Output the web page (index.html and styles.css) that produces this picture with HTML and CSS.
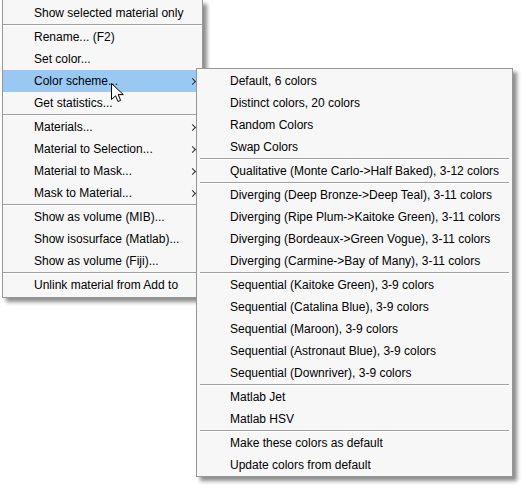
FILE: index.html
```html
<!DOCTYPE html>
<html>
<head>
<meta charset="utf-8">
<link rel="stylesheet" href="styles.css">
</head>
<body>
<div class="stage">
  <div class="menu main-menu">
    <div class="item">Show selected material only</div>
    <div class="sep"></div>
    <div class="item">Rename... (F2)</div>
    <div class="item">Set color...</div>
    <div class="item active has-sub">Color scheme...</div>
    <div class="item">Get statistics...</div>
    <div class="sep"></div>
    <div class="item has-sub">Materials...</div>
    <div class="item has-sub">Material to Selection...</div>
    <div class="item has-sub">Material to Mask...</div>
    <div class="item has-sub">Mask to Material...</div>
    <div class="sep"></div>
    <div class="item">Show as volume (MIB)...</div>
    <div class="item">Show isosurface (Matlab)...</div>
    <div class="item">Show as volume (Fiji)...</div>
    <div class="sep"></div>
    <div class="item">Unlink material from Add to</div>
  </div>

  <div class="menu sub-menu">
    <div class="item">Default, 6 colors</div>
    <div class="item">Distinct colors, 20 colors</div>
    <div class="item">Random Colors</div>
    <div class="item">Swap Colors</div>
    <div class="sep"></div>
    <div class="item">Qualitative (Monte Carlo-&gt;Half Baked), 3-12 colors</div>
    <div class="sep"></div>
    <div class="item">Diverging (Deep Bronze-&gt;Deep Teal), 3-11 colors</div>
    <div class="item">Diverging (Ripe Plum-&gt;Kaitoke Green), 3-11 colors</div>
    <div class="item">Diverging (Bordeaux-&gt;Green Vogue), 3-11 colors</div>
    <div class="item">Diverging (Carmine-&gt;Bay of Many), 3-11 colors</div>
    <div class="sep"></div>
    <div class="item">Sequential (Kaitoke Green), 3-9 colors</div>
    <div class="item">Sequential (Catalina Blue), 3-9 colors</div>
    <div class="item">Sequential (Maroon), 3-9 colors</div>
    <div class="item">Sequential (Astronaut Blue), 3-9 colors</div>
    <div class="item">Sequential (Downriver), 3-9 colors</div>
    <div class="sep"></div>
    <div class="item">Matlab Jet</div>
    <div class="item">Matlab HSV</div>
    <div class="sep"></div>
    <div class="item">Make these colors as default</div>
    <div class="item">Update colors from default</div>
  </div>

  <svg class="cursor" width="13" height="20" viewBox="0 0 13 20">
    <path d="M0.5 0.5 L0.5 16.5 L4.5 12.8 L7 18.5 L9.6 17.4 L7.2 11.6 L12.3 11.6 Z" fill="#fff" stroke="#000" stroke-width="1" stroke-linejoin="miter"/>
  </svg>
</div>
</body>
</html>
```

FILE: styles.css
```css
html, body {
  margin: 0;
  padding: 0;
  background: #ffffff;
}

.stage {
  position: relative;
  width: 525px;
  height: 489px;
  font-family: "Liberation Sans", Arial, sans-serif;
  font-size: 12px;
  color: #000;
}

.menu {
  box-sizing: border-box;
  background: #f7f7f7;
  border: 1px solid #979797;
  box-shadow: 4px 4px 4px rgba(0, 0, 0, 0.45);
  display: flex;
  flex-direction: column;
}

.main-menu {
  margin-left: 2px;
  width: 201px;
  border-top: none;
  padding: 2px 0 1px 0;
}

.sub-menu {
  position: absolute;
  left: 196px;
  top: 68px;
  width: 317px;
  padding: 1px 0 0 0;
}

.item {
  position: relative;
  height: 22px;
  line-height: 23px;
  white-space: nowrap;
}

.main-menu .item {
  padding-left: 31px;
}

.sub-menu .item {
  padding-left: 33px;
}

.item.active {
  background: #99c9f3;
}

.has-sub::after {
  content: "";
  position: absolute;
  right: 7px;
  top: 9px;
  width: 4px;
  height: 4px;
  border-right: 1px solid #2b2b2b;
  border-top: 1px solid #2b2b2b;
  transform: rotate(45deg);
}

.sep {
  height: 1px;
  background: #a0a0a0;
  border-bottom: 1px solid #ffffff;
}

.sub-menu .sep {
  margin: 0 3px 0 3px;
}

.cursor {
  position: absolute;
  left: 111px;
  top: 83px;
}
```
